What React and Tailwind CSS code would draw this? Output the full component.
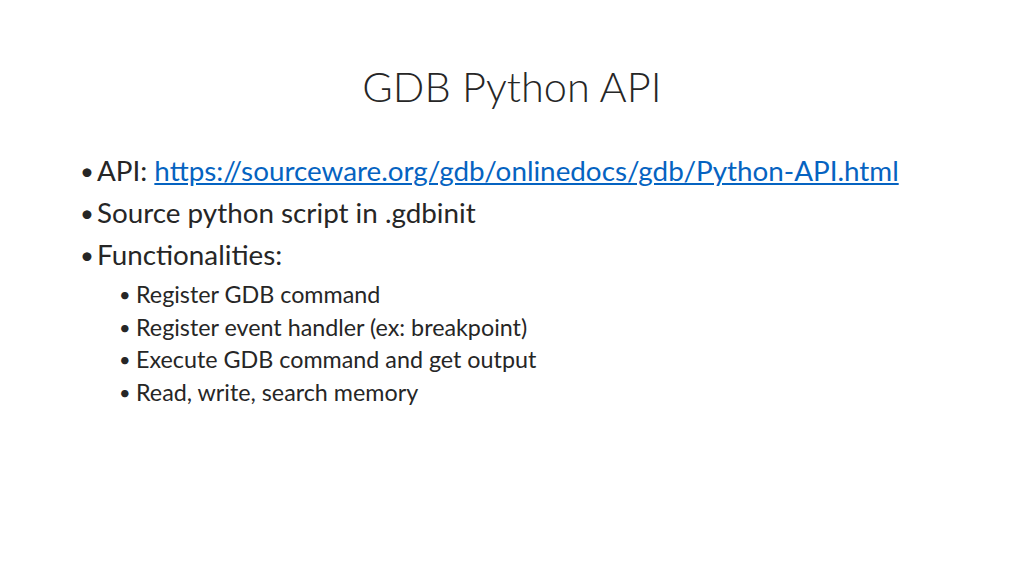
export default function App() {
  const f = { fontFamily: 'Lato, "Open Sans", sans-serif' };
  return (
    <div className="w-[1024px] h-[576px] bg-white text-[#262626] relative" style={f}>
      <div className="pt-[60px] text-center text-[41.5px] leading-[52px] font-light">GDB Python API</div>
      <div className="pl-[80px] pt-[38px]">
        {[
          <>API: <span className="text-[#0563C1] underline">https://sourceware.org/gdb/onlinedocs/gdb/Python-API.html</span></>,
          "Source python script in .gdbinit",
          "Functionalities:",
        ].map((t, i) => (
          <div key={i} className="flex text-[27.8px] leading-[42px]">
            <span className="w-[17px] text-[24px]">•</span><span>{t}</span>
          </div>
        ))}
        <div className="pl-[39px] pt-[2px]">
          {["Register GDB command", "Register event handler (ex: breakpoint)", "Execute GDB command and get output", "Read, write, search memory"].map((t) => (
            <div key={t} className="flex text-[23.3px] leading-[32.5px]">
              <span className="w-[17px] text-[20px]">•</span><span>{t}</span>
            </div>
          ))}
        </div>
      </div>
    </div>
  );
}
